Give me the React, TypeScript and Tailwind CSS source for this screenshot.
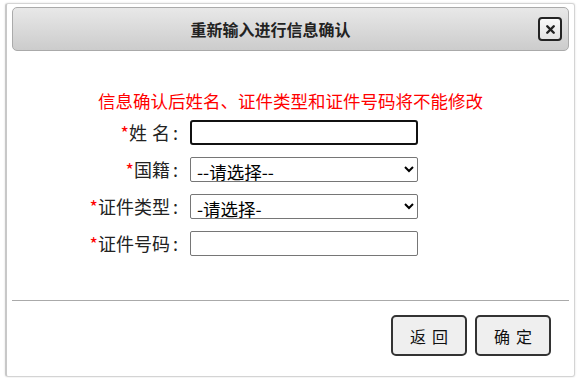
import { X } from "lucide-react";

const FONT = { fontFamily: '"Noto Sans CJK SC", "Noto Sans", sans-serif' };

function Label({ text, spaced }: { text: string; spaced?: boolean }) {
  return (
    <div className="flex w-[166px] items-center justify-end text-[18px] leading-none text-[#222]">
      <span className="text-[#ff0000]">*</span>
      {spaced ? (
        <>
          <span className="mr-[5px]">{text.slice(0, 1)}</span>
          <span>{text.slice(1)}</span>
        </>
      ) : (
        <span>{text}</span>
      )}
      <span className="ml-[3px]">:</span>
    </div>
  );
}

export default function App() {
  return (
    <div className="h-[378px] w-[578px] bg-white pl-[5px] pt-[3px]" style={FONT}>
      <div className="flex h-[374px] w-[570px] flex-col rounded-[3px] border border-[#d4d4d4] border-l-2 border-l-[#c8c8c8] px-[5px] pt-[3px] shadow-[0_0_2px_rgba(0,0,0,0.15)]">
        {/* header */}
        <div className="relative flex h-[44px] items-center justify-center rounded-[5px] border border-[#aaaaaa] bg-gradient-to-b from-[#e8e8e8] to-[#cccccc] pr-[40px]">
          <span className="text-[16px] font-bold text-[#222]">重新输入进行信息确认</span>
          <button className="absolute right-[6px] top-[9px] flex h-[24px] w-[24px] items-center justify-center rounded-[4px] border-2 border-[#222] bg-gradient-to-b from-[#fafafa] to-[#e2e2e2]">
            <X size={13} strokeWidth={4.5} className="text-[#222]" />
          </button>
        </div>

        {/* body */}
        <div className="flex h-[249px] flex-col">
          <div className="mt-[41px] text-center text-[17.5px] leading-none text-[#ff0000]">
            信息确认后姓名、证件类型和证件号码将不能修改
          </div>
          <div className="mt-[10px] flex flex-col gap-[12px]">
            <div className="flex items-center gap-[12px]">
              <Label text="姓名" spaced />
              <input className="h-[25px] w-[228px] rounded-[3px] border-2 border-[#111] px-1 text-[17px] outline-none" />
            </div>
            <div className="flex items-center gap-[12px]">
              <Label text="国籍" />
              <select className="h-[25px] w-[228px] rounded-[2px] border border-[#767676] bg-white px-[2px] text-[17.5px] leading-none text-black">
                <option>--请选择--</option>
              </select>
            </div>
            <div className="flex items-center gap-[12px]">
              <Label text="证件类型" />
              <select className="h-[25px] w-[228px] rounded-[2px] border border-[#767676] bg-white px-[2px] text-[17.5px] leading-none text-black">
                <option>-请选择-</option>
              </select>
            </div>
            <div className="flex items-center gap-[12px]">
              <Label text="证件号码" />
              <input className="h-[25px] w-[228px] rounded-[2px] border border-[#767676] px-1 text-[17px] outline-none" />
            </div>
          </div>
        </div>

        <div className="border-t border-[#aaaaaa]" />

        <div className="flex justify-end gap-[8px] pr-[18px] pt-[14px]">
          <button className="h-[41px] w-[76px] rounded-[5px] border-2 border-[#333] bg-[#efefef] pl-[6px] text-[16px] tracking-[6px] text-[#111]">
            返回
          </button>
          <button className="h-[41px] w-[76px] rounded-[5px] border-2 border-[#333] bg-[#efefef] pl-[6px] text-[16px] tracking-[6px] text-[#111]">
            确定
          </button>
        </div>
      </div>
    </div>
  );
}
